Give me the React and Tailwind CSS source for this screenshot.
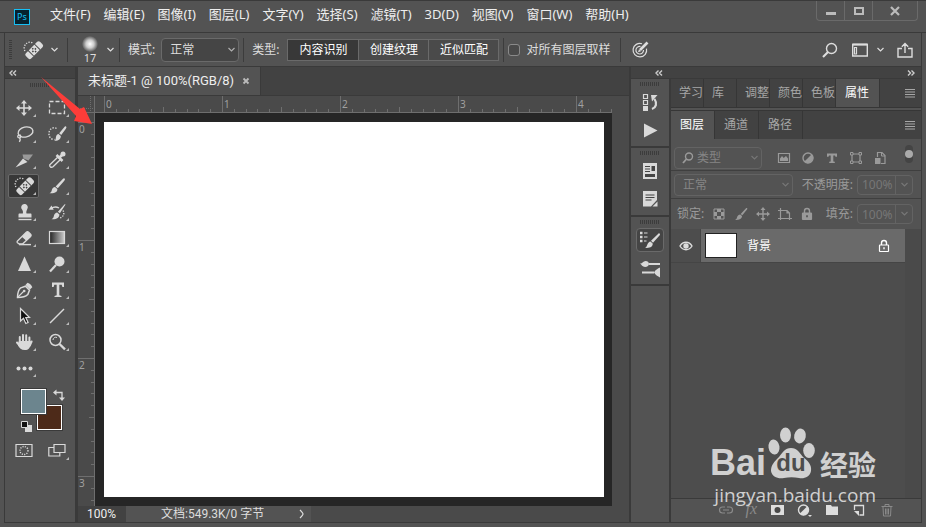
import { useLayoutEffect, useRef, useState } from 'react';
import clsx from 'clsx';

const menus = ['文件(F)', '编辑(E)', '图像(I)', '图层(L)', '文字(Y)', '选择(S)', '滤镜(T)', '3D(D)', '视图(V)', '窗口(W)', '帮助(H)'];
const sampleTypes = ['内容识别', '创建纹理', '近似匹配'];
const INCH = 118;

function Icon({ size = 22, w, h, className, children }) {
  const width = w || size;
  const height = h || size;
  return (
    <svg
      width={width}
      height={height}
      viewBox={`0 0 ${width} ${height}`}
      fill="none"
      stroke="currentColor"
      strokeWidth="1.4"
      aria-hidden="true"
      className={clsx('shrink-0', className)}
    >
      {children}
    </svg>
  );
}

const Chevron = ({ className }) => (
  <Icon w={9} h={6} className={className}>
    <path d="M1.500 1l3 3 3-3" strokeWidth="1.200" />
  </Icon>
);

const Bandage = () => (
  <Icon>
    <g transform="rotate(-45 12 11)">
      <rect x="2" y="7.500" width="20" height="7.500" rx="2" fill="currentColor" stroke="none" />
      <path d="M7.500 7v8M16.500 7v8" stroke="#444" strokeWidth="1" />
      <path d="M12 8.500v1.500M12 12.500v1.500M9.500 11.200H11M13 11.200h1.500" stroke="#444" strokeWidth="1.500" />
    </g>
    <path d="M3 12a5.5 5.5 0 0 1 1-7 5.500 5.500 0 0 1 7-1" strokeWidth="1.3" strokeDasharray="1.3 1.3" />
  </Icon>
);

const Brush = () => (
  <Icon>
    <path d="M18.500 3.500c.8.6.4 1.400-.2 2.200l-6.500 7.600-2.200-1.900 7.200-7.400c.6-.6 1.200-.9 1.700-.5z" fill="currentColor" stroke="none" />
    <path d="M9 12l2.300 2c.3 2.600-1.700 4.500-7.800 4.200 2-.8 1.900-2 2.500-3.700.5-1.500 1.600-2.500 3-2.500z" fill="currentColor" stroke="none" />
  </Icon>
);

const MoveShape = () => (
  <>
    <path d="M11 5v12M5 11h12" strokeWidth="1.6" />
    <path d="M11 3l3 3.500H8zM11 19l3-3.500H8zM3 11l3.500-3v6zM19 11l-3.500-3v6z" fill="currentColor" stroke="none" />
  </>
);

const tools = [
  ['移动', <Icon><MoveShape /></Icon>],
  ['矩形选框', <Icon><rect x="3.500" y="4.500" width="15" height="12" strokeWidth="1.300" strokeDasharray="4 2" /></Icon>],
  ['套索', (
    <Icon>
      <ellipse cx="12.500" cy="9" rx="7.500" ry="5" transform="rotate(-12 12.500 9)" />
      <path d="M6.500 12c-2.500.2-2.300 3 0 2.800 1.600-.2 1.500-2.500.3-3M6.500 14.800c1 1.200.8 2.700-.2 4" strokeWidth="1.300" />
    </Icon>
  )],
  ['快速选择', (
    <Icon>
      <path d="M10.500 5.500A5 5.500 0 0 0 3 10.500a5 5.500 0 0 0 5.500 6" strokeDasharray="1.400 1.400" />
      <path d="M20 3.500c.8.7.3 1.600-.3 2.400l-4.500 6-2-1.700 5-5.900c.6-.7 1.200-1.300 1.800-.8zM12.500 11l2.300 2c.1 3.300-2.500 5-6.300 4.700 1.600-1 1-2.400 1.600-4.200.4-1.400 1.200-2.300 2.400-2.500z" fill="currentColor" stroke="none" />
    </Icon>
  )],
  ['切片', (
    <Icon>
      <path d="M9.500 5.500H20l-4.500 6-5-2z" fill="#999" stroke="none" />
      <path d="M2.500 18.500L10 9.500l4.500 3.500z" fill="currentColor" stroke="none" />
    </Icon>
  )],
  ['吸管', (
    <Icon>
      <path d="M12 8l2.500 2.500-7.500 7.200c-1.600 1.200-3.800.3-3.200-1.900z" />
      <path d="M10.500 6l6 6M13.500 8.500l4-4" strokeWidth="2.500" />
      <circle cx="17" cy="5" r="2.500" fill="currentColor" stroke="none" />
    </Icon>
  )],
  ['污点修复画笔', <Bandage />],
  ['画笔', <Brush />],
  ['仿制图章', (
    <Icon>
      <path d="M8.200 6.500a3.300 3.300 0 1 1 6.100 1.500c-.8 1.600-1.300 3-.8 4.500h4c.8 0 1 .5 1 1.300v2.700H5.500v-2.700c0-.8.3-1.300 1-1.300h3.300c.5-1.500 0-2.900-.9-4.300-.4-.5-.7-1.100-.7-1.700z" fill="currentColor" stroke="none" />
      <path d="M5.500 18.500h13" />
    </Icon>
  )],
  ['历史记录画笔', (
    <Icon>
      <path d="M19.500 3.500l-5.600 8.800-2-1.600 6.300-7c.6-.6 1-.6 1.300-.2zM11.200 11.500l2.200 2c-.1 3-2.400 5-7.900 4.700 1.900-.8 2-2.200 2.500-3.800.5-1.500 1.600-2.600 3.200-2.900z" fill="currentColor" stroke="none" />
      <path d="M5 7.500c3-2 5.500-1.800 8-.5" />
      <path d="M2.500 8.800l3-4.300 2.200 4.300z" fill="currentColor" stroke="none" />
      <path d="M17 9.500c2 3.500 0 6.500-3 7.500" strokeDasharray="1.300 1.300" />
    </Icon>
  )],
  ['橡皮擦', (
    <Icon>
      <path d="M4.500 14l8.800-8.800c.7-.7 1.600-.7 2.300 0l2 2c.7.7.7 1.600 0 2.300L9.500 17H6.300l-1.800-1.200c-.5-.5-.5-1.300 0-1.800z" strokeWidth="1.300" />
      <path d="M8.800 9.700l4.500-4.500c.7-.7 1.600-.7 2.300 0l2 2c.7.7.7 1.600 0 2.300l-4.300 4.300z" fill="currentColor" stroke="none" />
      <path d="M6 17.600h12" />
    </Icon>
  )],
  ['渐变', (
    <Icon>
      <linearGradient id="grad"><stop stopColor="#222" /><stop offset="1" stopColor="#ccc" /></linearGradient>
      <rect x="3.500" y="4.500" width="15" height="12" fill="url(#grad)" strokeWidth="1.200" />
    </Icon>
  )],
  ['锐化', <Icon><path d="M11.500 3.500L18 18H5z" fill="currentColor" stroke="none" /></Icon>],
  ['减淡', (
    <Icon>
      <circle cx="13.500" cy="8.500" r="5" fill="currentColor" stroke="none" />
      <path d="M10 12l-6 6.500" strokeWidth="2.200" />
    </Icon>
  )],
  ['钢笔', (
    <Icon>
      <path d="M4.500 18.500c0-4 .8-7.500 3.300-9.700l4.700-1.600 4 3.900-1.700 4.400c-2.300 2.300-6.300 3-10.300 3z" strokeWidth="1.500" />
      <path d="M4.500 18.500L11 12" strokeWidth="1.100" />
      <circle cx="11.200" cy="12" r="1.300" fill="currentColor" stroke="none" />
      <path d="M12.500 6l2-2.300c2.500.8 4 2.400 4.800 4.600L17 10.500z" fill="currentColor" stroke="none" />
    </Icon>
  )],
  ['横排文字', (
    <Icon>
      <path d="M6 3.500h12V8h-1.600l-.7-2.300h-2.400v10.600l2.200.6v1.200H8.500v-1.200l2.200-.6V5.700H8.300L7.600 8H6z" fill="currentColor" stroke="none" />
    </Icon>
  )],
  ['路径选择', <Icon><path d="M7.500 3.500v12.500l3-2.800 2.300 5.300 2.300-1-2.300-5h3.700z" fill="#111" strokeWidth="1.200" /></Icon>],
  ['直线', <Icon><path d="M4 18L18 4" /></Icon>],
  ['抓手', (
    <Icon>
      <path d="M6.800 12V6M10 11V4M13.200 11V4.300M16.400 12V6.500M18.600 10.500l-1.800 4M4 11.500l3.500 4" strokeWidth="2" strokeLinecap="round" />
      <path d="M5.800 10h11.600v4.500c-.7 2.700-1.800 4.500-5.600 4.500-3.700 0-5.300-2-6.800-4.500z" fill="currentColor" stroke="none" />
    </Icon>
  )],
  ['缩放', (
    <Icon>
      <circle cx="9.500" cy="9" r="5.500" strokeWidth="1.500" />
      <path d="M7 9a2.800 2.800 0 0 1 4-2.500" strokeWidth="1" />
      <path d="M13.500 13l5.500 5.300" strokeWidth="2.400" />
    </Icon>
  )],
  ['编辑工具栏', (
    <Icon>
      <g fill="currentColor" stroke="none"><circle cx="5.500" cy="11.500" r="2" /><circle cx="11.500" cy="11.500" r="2" /><circle cx="17.500" cy="11.500" r="2" /></g>
    </Icon>
  )],
];

const dockGroups = [
  [
    ['历史记录', (
      <Icon>
        <path d="M4.500 3.500h4v4h-4zM4.500 9.500h4v4h-4z" strokeWidth="1.200" />
        <path d="M4 15h5v5H4z" fill="currentColor" stroke="none" />
        <path d="M13 18c4-1.500 5.500-5.500 2.500-10" strokeWidth="2.200" />
        <path d="M12 4h6.500L13 10.500z" fill="currentColor" stroke="none" />
      </Icon>
    )],
    ['动作', <Icon><path d="M5 4.500l13.500 7L5 18.500z" fill="currentColor" stroke="none" /></Icon>],
  ],
  [
    ['库', (
      <Icon>
        <path d="M4 3h14v16H4z" fill="currentColor" stroke="none" />
        <path d="M6 6.500h5M6 9h5M6 11.500h5" stroke="#444" strokeWidth="1" />
        <path d="M12.500 6h3.500v5h-3.500zM6 14h10v3H6z" fill="#444" stroke="none" />
      </Icon>
    )],
    ['注释', (
      <Icon>
        <path d="M4 3h14v9l-6 6.500H4z" fill="currentColor" stroke="none" />
        <path d="M18.500 13.500v5h-5z" fill="currentColor" stroke="none" />
        <path d="M6.500 7h9M6.500 9.500h9M6.500 12h6" stroke="#444" strokeWidth="1.200" />
      </Icon>
    )],
  ],
  [
    ['画笔设置', (
      <Icon>
        <path d="M1 4h2.500M1 8h2.500M1 12h2.500" strokeWidth="2.500" />
        <path d="M5 4h3.500M5 8h3.500M5 12h2.500" strokeWidth="1.200" />
        <path d="M20.500 4.500c.8.6.6 1.300 0 2L14 13.800l-2-2 7.300-7c.5-.5.900-.6 1.200-.3zM11.500 12.500l2.200 2c.2 3-2.200 4.800-7.700 4.300 2-.8 1.700-1.900 2.500-3.500.6-1.500 1.600-2.500 3-2.800z" fill="currentColor" stroke="none" />
      </Icon>
    )],
    ['画笔', (
      <Icon>
        <path d="M10 7h11M3 15.500h12" strokeWidth="2" />
        <path d="M1 6.500c2.500.3 3-2.500 5.500-2.500C9 4 10 5.500 10 7s-1.500 3-4 3c-2.700 0-3.300-2.300-5-3.500zM21 10.500v10c-2-1-5-2.800-6-5 1-2.500 4-4 6-5z" fill="currentColor" stroke="none" />
      </Icon>
    )],
  ],
];

const filterIcons = [
  ['像素图层', <Icon size={14}><path d="M1.500 2.500h11v9h-11z" strokeWidth="1.200" /><path d="M3 10V7.500L5 5l1.700 2L9 5l2 2.500V10z" fill="currentColor" stroke="none" /></Icon>],
  ['调整图层', <Icon size={14}><circle cx="7" cy="7" r="5" /><path d="M10.800 3.200A5.400 5.400 0 0 1 3.200 10.800z" fill="currentColor" stroke="none" /></Icon>],
  ['文字图层', <Icon size={14}><path d="M2 2.500h10v3.300h-1.500L10 4.400H8.300v6l1.500.4V12H4.200v-1.200l1.500-.4v-6H4l-.5 1.400H2z" fill="currentColor" stroke="none" /></Icon>],
  ['形状图层', <Icon size={14}><path d="M3 3h8v8H3z" strokeWidth="1.200" /><path d="M1.500 1.500h2.500V4H1.500zM10 1.500h2.500V4H10zM1.500 10h2.500v2.500H1.500zM10 10h2.500v2.500H10z" fill="#535353" strokeWidth="1" /></Icon>],
  ['智能对象', <Icon size={14}><path d="M4.500 6V1.500H9l3 3v8H8" strokeWidth="1.200" /><path d="M8.500 1.500V5H12" strokeWidth="1" /><path d="M2 7h5.500v6H2z" fill="currentColor" stroke="none" /></Icon>],
];

const Lock = ({ solid }) => (
  <Icon size={14}>
    <path d="M4.500 6V4a2.500 2.500 0 0 1 5 0v2" />
    <rect x="2.500" y="6" width="9" height="6.500" rx="0.500" fill={solid ? 'currentColor' : 'none'} strokeWidth="1.200" />
    <path d="M7 8.300v2" stroke={solid ? '#444' : 'currentColor'} />
  </Icon>
);

const lockIcons = [
  ['锁定透明像素', (
    <Icon size={14}>
      <path d="M2 2h10v10H2z" strokeWidth="1" />
      <path d="M5 2h4v3H5zM2 5h3v4H2zM9 5h3v4H9zM5 9h4v3H5z" fill="currentColor" stroke="none" />
    </Icon>
  )],
  ['锁定图像像素', <Icon size={14}><path d="M13 1c.6.500.3 1 0 1.500L8.300 8.300 6.700 7 12 1.200c.3-.3.700-.4 1-.2zM6.200 7.400L8 9c0 2.600-2.500 4-7 4 2-1 1.700-2 2.200-3.300.5-1.300 1.500-2.300 3-2.300z" fill="currentColor" stroke="none" /></Icon>],
  ['锁定位置', <Icon size={14}><path d="M7 2v10M2 7h10" /><path d="M7 0l2.500 3h-5zM7 14l2.500-3h-5zM0 7l3-2.500v5zM14 7l-3-2.500v5z" fill="currentColor" stroke="none" /></Icon>],
  ['锁定画板', <Icon size={14}><path d="M2.500 1v12M0 3.500h9l2.500 2.500v7M0 11.500h14M9 3.500V6h2.500" strokeWidth="1.200" /></Icon>],
  ['锁定全部', <Lock solid />],
];

const footerIcons = [
  ['链接图层', true, <Icon w={16} h={14}><path d="M7 4H4.500a3 3 0 0 0 0 6H7M9 4h2.500a3 3 0 0 1 0 6H9M5 7h6" strokeWidth="1.200" /></Icon>],
  ['图层样式', true, <span className="font-['Liberation_Serif',serif] text-base leading-none italic">fx</span>],
  ['图层蒙版', false, <Icon w={16} h={14}><path d="M2 2h13v10H2z" fill="currentColor" stroke="none" /><circle cx="8.500" cy="7" r="3" fill="#484848" stroke="none" /></Icon>],
  ['调整图层', false, <Icon w={16} h={14}><circle cx="7.500" cy="7" r="5" /><path d="M11.300 3.200A5.400 5.400 0 0 1 3.700 10.800z" fill="currentColor" stroke="none" /><path d="M12 12h4l-2 2z" fill="currentColor" stroke="none" /></Icon>],
  ['新建组', false, <Icon w={16} h={14}><path d="M2 2h5l1 1.500h6V12H2z" fill="currentColor" stroke="none" /></Icon>],
  ['新建图层', false, <Icon w={16} h={14}><path d="M3.500 7V2.500h9v9.500H8.500" strokeWidth="1.300" /><path d="M3 8l5 5V8z" fill="currentColor" stroke="none" /></Icon>],
  ['删除图层', true, <Icon w={16} h={14}><path d="M2.500 3.500h11M6 3V1.500h4V3M4 4l.5 9h7l.5-9M6.500 5.500v6M8 5.500v6M9.500 5.500v6" strokeWidth="1" /></Icon>],
];

const Grip = () => (
  <div className="mx-auto h-1 w-5 bg-[repeating-linear-gradient(90deg,#3c3c3c_0_1px,transparent_1px_2px)]" />
);

const Divider = () => <div className="h-6 w-px shrink-0 bg-[#3c3c3c]" />;

function DoubleArrow({ right }) {
  return (
    <Icon w={8} h={6} className={clsx('text-[#ccc]', right && 'rotate-180')}>
      <path d="M3.500 .5L1 3l2.500 2.500M7 .5L4.500 3 7 5.500" />
    </Icon>
  );
}

function Select({ label, value, className, inset = 'pl-2' }) {
  return (
    <span className={clsx('relative flex items-center rounded-sm border', className)}>
      <select aria-label={label} defaultValue={value} className={clsx('h-full w-full appearance-none outline-none', inset)}>
        <option>{value}</option>
      </select>
      <Chevron className="pointer-events-none absolute right-0.5 opacity-70" />
    </span>
  );
}

function Percent({ id, label }) {
  return (
    <>
      <label htmlFor={id} className="ml-auto">{label}</label>
      <span className="ml-1 flex h-5 w-14 items-center rounded-sm border border-[#636363]">
        <input id={id} defaultValue="100%" className="h-full w-0 flex-1 border-r border-[#636363] pl-1 text-[#777] outline-none" />
        <button aria-label={`${label}选项`} className="flex w-4 justify-center text-[#777]"><Chevron /></button>
      </span>
    </>
  );
}

function TitleBar() {
  return (
    <header className="flex h-8 items-center border-b border-[#3a3a3a] px-2">
      <div className="ml-1.5 flex size-4 items-center justify-center border border-[#17c0f5] bg-[#06222e] text-[9px] leading-none text-[#17c0f5]">Ps</div>
      <nav className="ml-5 flex gap-[13px] pb-1 text-[13px] text-[#eee]">
        {menus.map((m) => <button key={m} className="whitespace-nowrap">{m}</button>)}
      </nav>
      <div className="ml-auto flex h-5 self-start rounded-b-sm border border-t-0 border-[#6a6a6a] text-[#bbb]">
        <button aria-label="最小化" className="flex w-7 items-center justify-center border-r border-[#6a6a6a]">
          <Icon w={12} h={12}><path d="M1 8.500h10" strokeWidth="3" /></Icon>
        </button>
        <button aria-label="最大化" className="flex w-7 items-center justify-center border-r border-[#6a6a6a]">
          <Icon w={12} h={12}><path d="M2 3h8v6H2z" strokeWidth="2" /></Icon>
        </button>
        <button aria-label="关闭" className="flex w-11 items-center justify-center">
          <Icon w={12} h={12}><path d="M2 2l8 8M10 2l-8 8" strokeWidth="2.200" /></Icon>
        </button>
      </div>
    </header>
  );
}

function OptionsBar() {
  const [type, setType] = useState('内容识别');
  return (
    <section className="mx-1 flex h-[34px] items-center border-x border-b border-[#3a3a3a] text-xs text-[#ddd]">
      <div className="ml-1 h-5 w-[3px] bg-[repeating-linear-gradient(#3c3c3c_0_1px,transparent_1px_2px)]" />
      <button aria-label="工具预设" className="ml-2.5 flex items-center gap-1.5"><Bandage /><Chevron /></button>
      <span className="mr-3.5 ml-2"><Divider /></span>
      <button aria-label="画笔大小" className="flex items-center gap-2">
        <span className="flex flex-col items-center text-[11px] leading-3">
          <span className="size-4 rounded-full bg-[radial-gradient(#fff,#ccc_35%,transparent_72%)]" />
          17
        </span>
        <Chevron />
      </button>
      <span className="mx-1"><Divider /></span>
      <label className="flex items-center gap-1.5 pl-1 whitespace-nowrap">
        模式:
        <Select label="模式" value="正常" className="h-6 w-[78px] border-[#6a6a6a] bg-[#454545]" />
      </label>
      <span className="mr-2 ml-1"><Divider /></span>
      <span className="whitespace-nowrap">类型:</span>
      <div className="ml-2 flex h-[22px] border border-[#6a6a6a]">
        {sampleTypes.map((t, i) => (
          <button
            key={t}
            onClick={() => setType(t)}
            className={clsx('w-[70px] text-white', i > 0 && 'border-l border-[#6a6a6a]', t === type ? 'bg-[#383838]' : 'bg-[#4a4a4a]')}
          >
            {t}
          </button>
        ))}
      </div>
      <span className="mx-1"><Divider /></span>
      <label className="flex items-center gap-1.5 whitespace-nowrap">
        <input type="checkbox" className="size-3 appearance-none rounded-[3px] border border-[#8a8a8a] bg-[#4a4a4a] checked:bg-[#ddd]" />
        对所有图层取样
      </label>
      <span className="mx-2.5"><Divider /></span>
      <button aria-label="压力控制大小">
        <Icon size={18}>
          <path d="M11 2.700a6.800 6.800 0 1 0 4.500 5M9.500 5.500a3.800 3.800 0 1 0 3 3.500" strokeWidth="1.200" />
          <path d="M9 9L16.500 1.500" strokeWidth="2.600" />
          <path d="M7 11.200l1-3 2 2z" fill="currentColor" stroke="none" />
        </Icon>
      </button>
      <div className="ml-auto flex items-center pr-2">
        <button aria-label="搜索">
          <Icon size={16}><circle cx="9.500" cy="6.500" r="5" /><path d="M6 10l-5 5" strokeWidth="2.200" /></Icon>
        </button>
        <button aria-label="工作区" className="ml-3.5 flex items-center gap-2">
          <Icon w={16} h={14}><path d="M.7 1.500h14.600v11.500H.7z" /><path d="M.5 1.500h15" strokeWidth="2" /><path d="M2.500 4.500h2v6.500h-2z" strokeWidth="1.200" /></Icon>
          <Chevron />
        </button>
        <button aria-label="共享" className="ml-3">
          <Icon size={16}><path d="M5 6.500H1v8.500h14V6.500h-4M8 11V1.500M4.800 4.700L8 1.500l3.200 3.200" /></Icon>
        </button>
      </div>
    </section>
  );
}

function Toolbar() {
  const [active, setActive] = useState('污点修复画笔');
  return (
    <aside className="flex w-[72px] shrink-0 flex-col border-r-2 border-[#3a3a3a]">
      <div className="flex h-3 items-center border-b border-[#3a3a3a] bg-[#424242] pl-1"><DoubleArrow /></div>
      <div className="flex h-4 flex-col pt-1"><Grip /></div>
      <div className="grid auto-rows-[26px] grid-cols-[33px_33px] pl-0.5">
        {tools.map(([name, icon]) => (
          <button
            key={name}
            title={name}
            onClick={() => setActive(name)}
            className={clsx(
              'relative m-px flex items-center justify-center rounded-xs border',
              active === name ? 'border-[#6a6a6a] bg-[#383838]' : 'border-transparent',
            )}
          >
            {icon}
            <span className="absolute right-0.5 bottom-0.5 border-b-3 border-l-3 border-b-[#bbb] border-l-transparent" />
          </button>
        ))}
      </div>
      <div className="relative mt-2 ml-4 h-12 w-12">
        <button aria-label="背景色" className="absolute top-4 left-4 size-[25px] border border-white bg-[#4d2a19] outline outline-[#3a3a3a]" />
        <button aria-label="前景色" className="absolute top-0 left-0 size-[25px] border border-white bg-[#6c858e] outline outline-[#3a3a3a]" />
        <button aria-label="切换颜色" className="absolute top-0 left-8">
          <Icon size={12}><path d="M2 3.500h7v6" strokeWidth="1.300" /><path d="M0 3.500L3.500 .5v6zM9 12L6 8.500h6z" fill="currentColor" stroke="none" /></Icon>
        </button>
        <button aria-label="默认颜色" className="absolute top-8 left-0">
          <Icon size={11}><path d="M4 4h7v7H4z" fill="currentColor" stroke="none" /><path d="M.5 .5h6v6h-6z" fill="#111" strokeWidth="1" /></Icon>
        </button>
      </div>
      <div className="mt-1.5 grid grid-cols-[33px_33px] pl-0.5">
        <button aria-label="快速蒙版" className="flex justify-center">
          <Icon w={18} h={15}><path d="M1 1.500h16v12H1z" strokeWidth="1.200" /><circle cx="9" cy="7.500" r="4" strokeDasharray="1.200 1.200" /></Icon>
        </button>
        <button aria-label="屏幕模式" className="relative flex justify-center">
          <Icon w={18} h={15}><path d="M.8 4.500h11v8.500H.8z" strokeWidth="1.200" /><path d="M6 1.500h11v8H6z" fill="#535353" strokeWidth="1.200" /></Icon>
          <span className="absolute right-1 -bottom-0.5 border-b-3 border-l-3 border-b-[#bbb] border-l-transparent" />
        </button>
      </div>
    </aside>
  );
}

const range = (n) => Array.from({ length: n }, (_, i) => i);

function Ruler({ vertical }) {
  const ref = useRef(null);
  const [length, setLength] = useState(0);

  useLayoutEffect(() => {
    const measure = () => {
      const box = ref.current.getBoundingClientRect();
      setLength(vertical ? box.height : box.width);
    };
    measure();
    window.addEventListener('resize', measure);
    return () => window.removeEventListener('resize', measure);
  }, [vertical]);

  const tickCount = Math.max(0, Math.ceil(((length - 9) * 10) / INCH));
  const labelCount = Math.max(0, Math.floor((length - 24) / INCH) + 1);

  return (
    <div ref={ref} className="h-full w-full">
      <svg width="100%" height="100%" className="block" stroke="#6e6e6e" fontSize="10">
        {range(tickCount).map((i) => {
          const at = Math.round((i * INCH) / 10) + 9.5;
          const start = i % 10 === 0 ? 0 : i % 5 === 0 ? 11 : 13;
          return vertical ? <path key={i} d={`M${start} ${at}H17`} /> : <path key={i} d={`M${at} ${start}V17`} />;
        })}
        {range(labelCount).map((i) => (
          <text key={i} x={vertical ? 1 : i * INCH + 11} y={vertical ? i * INCH + 20 : 12} fill="#a0a0a0" stroke="none">{i}</text>
        ))}
      </svg>
    </div>
  );
}

function DocumentArea() {
  return (
    <main className="flex min-w-0 flex-1 flex-col border-l border-[#3a3a3a]">
      <div className="flex h-[29px] border-b border-[#3a3a3a] bg-[#424242]">
        <div className="flex items-center gap-2 border-r border-[#3a3a3a] bg-[#535353] px-2.5 font-['Roboto','Noto_Sans_CJK_SC',sans-serif] text-[13px] text-[#eee]">
          未标题-1 @ 100%(RGB/8)
          <button aria-label="关闭文档" className="text-[#bbb]"><Icon size={8}><path d="M1.500 1.500l5 5M6.500 1.500l-5 5" strokeWidth="1.800" /></Icon></button>
        </div>
      </div>
      <div className="grid min-h-0 flex-1 grid-cols-[17px_1fr_17px] grid-rows-[17px_1fr] bg-[#4a4a4a]">
        <div className="border-r border-b border-[#6e6e6e]">
          <Icon size={16}><path d="M12.500 0v16M0 12.500h16" stroke="#6e6e6e" strokeWidth="1" strokeDasharray="1 1" /></Icon>
        </div>
        <div className="min-w-0 overflow-hidden border-b border-[#6e6e6e]"><Ruler /></div>
        <div className="row-span-2" />
        <div className="min-h-0 overflow-hidden border-r border-[#6e6e6e]"><Ruler vertical /></div>
        <div className="flex bg-[#262626] px-2 py-[9px] pl-[9px]"><div className="flex-1 bg-white" /></div>
      </div>
      <footer className="flex h-4 items-center bg-[#4a4a4a] font-['Roboto','Noto_Sans_CJK_SC',sans-serif] text-xs leading-none text-[#eee]">
        <input aria-label="缩放比例" defaultValue="100%" className="h-full w-12 bg-[#424242] pl-[9px] outline-none" />
        <div className="flex h-full w-[185px] items-center bg-[#535353] pr-1.5 pl-[35px] text-[#ddd]">
          文档:549.3K/0 字节
          <button aria-label="文档信息" className="ml-auto"><Icon w={6} h={10}><path d="M1 1q3 3 3 4t-3 4" strokeWidth="1.200" /></Icon></button>
        </div>
      </footer>
    </main>
  );
}

function Dock() {
  return (
    <div className="flex w-[38px] shrink-0 flex-col">
      {dockGroups.map((group, g) => (
        <div key={g} className="flex h-[69px] flex-col items-center border-b-2 border-[#3a3a3a] pt-[3px]">
          <Grip />
          <div className="mt-1 flex flex-col gap-1">
            {group.map(([name, icon]) => (
              <button
                key={name}
                title={name}
                className={clsx('flex h-6 w-7 items-center justify-center rounded-sm border', name === '画笔设置' ? 'border-[#6a6a6a] bg-[#454545]' : 'border-transparent')}
              >
                {icon}
              </button>
            ))}
          </div>
        </div>
      ))}
    </div>
  );
}

function Tabs({ items, active, tabClass }) {
  return (
    <div className="flex h-7 bg-[#424242] text-xs text-[#a6a6a6]">
      {items.map((t) => (
        <button
          key={t}
          className={clsx(
            'border-r border-[#363636] text-left whitespace-nowrap',
            t === active ? 'w-11 bg-[#535353] pl-[9px] text-white' : tabClass,
          )}
        >
          {t}
        </button>
      ))}
      <button aria-label="面板菜单" className="mr-1.5 ml-auto">
        <Icon w={10} h={9}><path d="M0 .5h10M0 3h10M0 5.500h10M0 8h10" strokeWidth="1" /></Icon>
      </button>
    </div>
  );
}

function LayersPanel() {
  return (
    <section className="flex min-h-0 flex-1 flex-col text-xs text-[#9a9a9a]">
      <Tabs items={['图层', '通道', '路径']} active="图层" tabClass="w-11 pl-[9px]" />
      <div className="flex h-8 items-center border-b border-[#3f3f3f] pt-1.5 pr-2 pl-[3px]">
        <span className="relative flex items-center">
          <Icon size={12} className="pointer-events-none absolute left-2"><circle cx="7" cy="4.500" r="3.500" /><path d="M4.500 7L1 11" strokeWidth="1.800" /></Icon>
          <Select label="滤镜类型" value="类型" inset="pl-[22px]" className="h-[22px] w-[88px] border-[#636363] text-[#858585]" />
        </span>
        <div className="ml-[15px] flex gap-2.5">
          {filterIcons.map(([name, icon]) => <button key={name} title={name}>{icon}</button>)}
        </div>
        <button aria-label="图层过滤开关" className="ml-auto h-[18px] w-2 self-start rounded-full bg-[#444]">
          <span className="block size-2 rounded-full bg-[#aaa]" />
        </button>
      </div>
      <div className="flex h-7 items-center border-b border-[#3f3f3f] pr-2 pl-[3px]">
        <Select label="混合模式" value="正常" className="h-[22px] w-[119px] border-[#636363] text-[#858585]" />
        <Percent id="opacity" label="不透明度:" />
      </div>
      <div className="flex h-[30px] items-center pr-2 pl-1.5">
        锁定:
        <div className="ml-2 flex gap-2">
          {lockIcons.map(([name, icon]) => <button key={name} title={name}>{icon}</button>)}
        </div>
        <Percent id="fill" label="填充:" />
      </div>
      <div className="flex min-h-0 flex-1 bg-[#4d4d4d]">
        <div className="flex-1">
          <div className="flex h-[34px] border-b border-[#454545] text-white">
            <button aria-label="显示图层" className="flex w-[30px] items-center justify-center border-r border-[#454545] text-[#ddd]">
              <Icon w={14} h={10}><path d="M1 5c3-5 9-5 12 0-3 5-9 5-12 0z" /><circle cx="7" cy="5" r="2" fill="currentColor" /></Icon>
            </button>
            <div className="flex flex-1 items-center bg-[#6a6a6a] pr-3.5 pl-1">
              <div className="h-[25px] w-8 border border-[#222] bg-white" />
              <span className="ml-2.5">背景</span>
              <span className="ml-auto"><Lock /></span>
            </div>
          </div>
        </div>
        <div className="w-4 bg-[#4a4a4a]" />
      </div>
      <footer className="flex h-6 items-center justify-between border-t border-[#3a3a3a] pr-[26px] pb-0.5 pl-[47px]">
        {footerIcons.map(([name, dim, icon]) => (
          <button key={name} title={name} className={dim ? 'text-[#8a8a8a]' : 'text-[#ddd]'}>{icon}</button>
        ))}
      </footer>
    </section>
  );
}

function Watermark() {
  return (
    <div className="pointer-events-none absolute right-[50px] bottom-5 font-['Open_Sans','Noto_Sans_CJK_SC',sans-serif] text-[#d0d0d0]">
      <div className="flex h-[54px] items-end justify-end pb-1 font-['Liberation_Sans','Noto_Sans_CJK_SC',sans-serif] font-bold">
        <span className="text-[36px] leading-8">Bai</span>
        <span className="relative flex h-[52px] w-[50px] items-end justify-center pb-1">
          <Icon w={50} h={52} className="absolute inset-0">
            <g fill="currentColor" stroke="none">
              <ellipse cx="8" cy="20" rx="5.500" ry="7.500" transform="rotate(-8 8 20)" />
              <ellipse cx="19.500" cy="8" rx="5.500" ry="7.500" />
              <ellipse cx="34" cy="9" rx="5.800" ry="7.500" transform="rotate(12 34 9)" />
              <ellipse cx="43" cy="23.500" rx="5.800" ry="7.500" />
              <path d="M25 21c6 0 9 5 12 9 5 4 9 8 8 14-1 6-7 8-12 7-5-1-10-1-15 0C12 52 6 50 5 44c0-6 3-9 8-14 3-4 6-9 12-9z" />
            </g>
          </Icon>
          <span className="relative text-[24px] leading-6 text-[#4d4d4d]">du</span>
        </span>
        <span className="ml-1 text-[28px] leading-6">经验</span>
      </div>
      <div className="text-right text-[19px] leading-6 font-medium">jingyan.baidu.com</div>
    </div>
  );
}

export default function App() {
  return (
    <div className="relative flex h-screen flex-col overflow-hidden border-t border-[#3a3a3a] bg-[#535353] font-['Noto_Sans','Noto_Sans_CJK_SC',sans-serif] text-[#d9d9d9]">
      <TitleBar />
      <OptionsBar />
      <div className="mx-1 mb-1 flex min-h-0 flex-1 border-x border-b border-[#3a3a3a]">
        <Toolbar />
        <DocumentArea />
        <div className="flex w-[292px] shrink-0 flex-col border-l-2 border-[#3a3a3a]">
          <div className="flex h-3 items-center justify-between border-b border-[#3a3a3a] bg-[#424242] pr-1.5 pl-6">
            <DoubleArrow />
            <DoubleArrow right />
          </div>
          <div className="flex min-h-0 flex-1">
            <Dock />
            <div className="flex min-w-0 flex-1 flex-col border-l-2 border-[#3a3a3a]">
              <Tabs items={['学习', '库', '调整', '颜色', '色板', '属性']} active="属性" tabClass="w-[33px] pl-2" />
              <div className="h-1 border-y border-[#363636]" />
              <LayersPanel />
            </div>
          </div>
        </div>
      </div>
      <Watermark />
      <Icon w={54} h={50} className="pointer-events-none absolute top-[75px] left-[39px]">
        <path d="M2 1L41 33l4-2 8 17-18-3 2-5z" fill="#fc3d39" stroke="none" />
      </Icon>
    </div>
  );
}
